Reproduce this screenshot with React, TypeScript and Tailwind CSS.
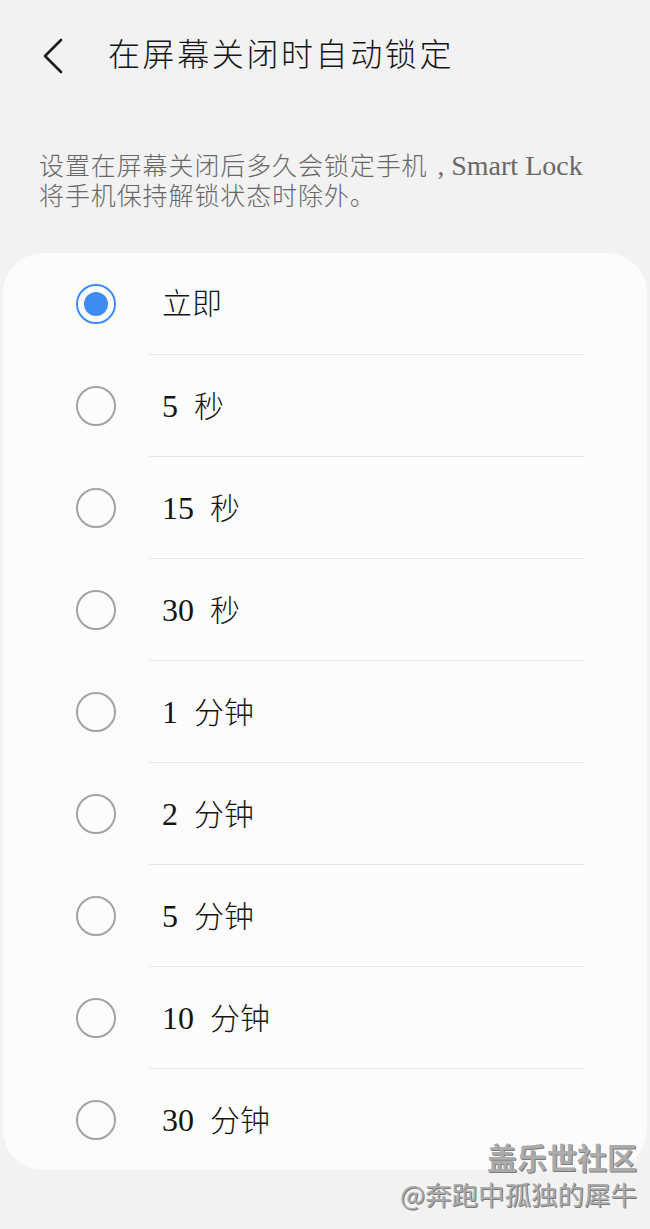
import React from "react";

const FONT = { fontFamily: '"Liberation Serif", "Noto Sans CJK SC", serif' };

const options: [string, string][] = [
  ["", "立即"],
  ["5", "秒"],
  ["15", "秒"],
  ["30", "秒"],
  ["1", "分钟"],
  ["2", "分钟"],
  ["5", "分钟"],
  ["10", "分钟"],
  ["30", "分钟"],
];

function Radio({ checked }: { checked: boolean }) {
  if (checked) {
    return (
      <div className="w-[40px] h-[40px] shrink-0 rounded-full border-[2px] border-[#3e8cf0] flex items-center justify-center">
        <div className="w-[24px] h-[24px] rounded-full bg-[#3e8cf0]" />
      </div>
    );
  }
  return <div className="w-[40px] h-[40px] shrink-0 rounded-full border-[2px] border-[#a3a3a3]" />;
}

export default function App() {
  return (
    <div className="relative w-[650px] h-[1229px] bg-[#f2f2f2] overflow-hidden" style={FONT}>
      {/* Header */}
      <div className="flex items-center h-[110px] pl-[40px]">
        <svg width="26" height="36" viewBox="0 0 26 36" className="mt-[2px]">
          <path d="M21 2 L5 18 L21 34" fill="none" stroke="#1a1a1a" strokeWidth="2.6" strokeLinecap="round" strokeLinejoin="round" />
        </svg>
        <div className="ml-[42px] text-[32px] leading-none tracking-[2.6px] text-[#151515] font-light">在屏幕关闭时自动锁定</div>
      </div>

      {/* Description */}
      <div className="pl-[39px] pr-[20px] pt-[40px] text-[#686868] font-light">
        <div className="flex items-baseline whitespace-nowrap h-[31px]">
          <span className="text-[25px] leading-[31px] tracking-[0.9px]">设置在屏幕关闭后多久会锁定手机</span>
          <span className="text-[27px] leading-[31px] ml-[10px]">,</span>
          <span className="text-[28px] leading-[31px] ml-[7px]">Smart Lock</span>
        </div>
        <div className="text-[25px] leading-[31px] tracking-[0.9px] h-[31px] whitespace-nowrap">将手机保持解锁状态时除外。</div>
      </div>

      {/* Card */}
      <div className="mt-[41px] mx-[3px] bg-[#fcfcfc] rounded-[40px] overflow-hidden">
        {options.map(([num, unit], i) => (
          <div key={i}>
            <div className="flex items-center h-[101px] pl-[73px]">
              <Radio checked={i === 0} />
              <div className="ml-[46px] flex items-baseline text-[#141414]">
                {num && <span className="text-[32px] leading-none">{num}</span>}
                <span className={`text-[30px] leading-none font-light ${num ? "ml-[16px]" : ""}`}>{unit}</span>
              </div>
            </div>
            {i < options.length - 1 && (
              <div className="ml-[146px] mr-[62px] h-[1px] bg-[#e6e6e6]" />
            )}
          </div>
        ))}
      </div>

      {/* Watermark */}
      <div
        className="absolute right-[13px] top-[1141px] flex flex-col items-end gap-[10px] text-[#ababab]"
        style={{ fontFamily: '"Noto Sans CJK SC", sans-serif' }}
      >
        <div className="text-[30px] leading-none font-bold [text-shadow:1px_1px_0_#7a7a7a]">盖乐世社区</div>
        <div className="text-[26.5px] leading-none [text-shadow:1px_1px_0_#7a7a7a]">@奔跑中孤独的犀牛</div>
      </div>
    </div>
  );
}
